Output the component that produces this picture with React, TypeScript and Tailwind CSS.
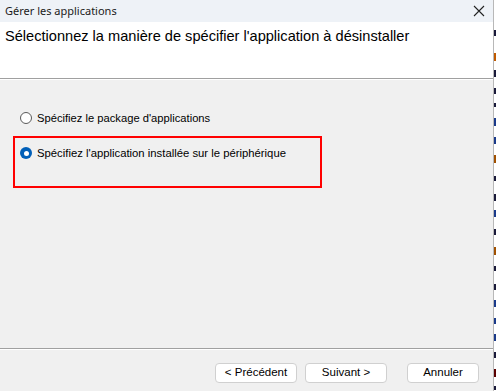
import React from "react";

const strip: [number, string, number][] = [
  [30, "#1a1a3a", 6], [53, "#c05a00", 8], [70, "#1a1a3a", 7], [88, "#1a1a3a", 6], [103, "#1a1a3a", 4],
  [118, "#1a3a8a", 8], [137, "#1a3a8a", 7], [155, "#a05000", 8], [176, "#1a1a3a", 5], [194, "#1a1a3a", 7],
  [210, "#1a3a8a", 7], [229, "#1a1a3a", 6], [247, "#a05000", 8], [266, "#1a1a3a", 5], [284, "#1a1a3a", 6],
  [300, "#1a3a8a", 7], [318, "#1a3a8a", 6], [334, "#1a3a8a", 7], [352, "#1a1a3a", 6],
  [369, "#5a0000", 8], [386, "#1a1a3a", 4],
];

export default function App() {
  const sans = { fontFamily: '"Liberation Sans", Arial, sans-serif' };
  return (
    <div className="flex w-[497px] h-[391px] overflow-hidden bg-white" style={sans}>
      <div className="flex flex-col w-[494px] h-[391px] border-r border-[#b8b8b8] shrink-0">
        <div className="h-[22px] bg-[#eef2f7] flex items-center justify-between pl-[5px] pr-[7px]">
          <span className="text-[11px] text-[#1a1a1a]" style={{ fontFamily: '"Noto Sans", sans-serif' }}>
            Gérer les applications
          </span>
          <svg width="12" height="12" viewBox="0 0 12 12" className="mr-[1px]">
            <path d="M1 1 L11 11 M11 1 L1 11" stroke="#222" strokeWidth="1.1" />
          </svg>
        </div>
        <div className="h-[56px] bg-white pl-[5px] pt-[5px]">
          <div className="text-[14.6px] text-black leading-[18px]">
            Sélectionnez la manière de spécifier l'application à désinstaller
          </div>
        </div>
        <div className="h-px bg-[#a0a0a0]" />
        <div className="h-px bg-white" />
        <div className="flex-1 bg-[#f0f0f0] pl-[13px] pt-[31px] pr-[20px]">
          <div className="flex items-center h-[14px] pl-[7px]">
            <span className="w-[12px] h-[12px] rounded-full border border-[#5a5a5a] bg-white shrink-0" />
            <span className="ml-[5px] text-[11.2px] text-black">Spécifiez le package d'applications</span>
          </div>
          <div className="mt-[11px] w-[309px] h-[52px] border-2 border-[#ff0000] pt-[8px] pl-[5px]">
            <div className="flex items-center h-[14px]">
              <span className="w-[12px] h-[12px] rounded-full bg-[#005fb8] flex items-center justify-center shrink-0">
                <span className="w-[5px] h-[5px] rounded-full bg-white" />
              </span>
              <span className="ml-[5px] text-[11.3px] text-black">Spécifiez l'application installée sur le périphérique</span>
            </div>
          </div>
        </div>
        <div className="h-px bg-[#a0a0a0]" />
        <div className="h-px bg-white" />
        <div className="h-[41px] bg-[#f0f0f0] flex items-start pt-[13px] pl-[215px]">
          <button className="w-[82px] h-[20px] rounded-[4px] border border-[#d0d0d0] bg-white text-[11.5px] text-black">
            &lt; Précédent
          </button>
          <button className="ml-[8px] w-[82px] h-[20px] rounded-[4px] border border-[#d0d0d0] bg-white text-[11.5px] text-black">
            Suivant &gt;
          </button>
          <button className="ml-[20px] w-[72px] h-[20px] rounded-[4px] border border-[#d0d0d0] bg-white text-[11.5px] text-black">
            Annuler
          </button>
        </div>
      </div>
      <div className="relative flex-1 bg-white overflow-hidden">
        {strip.map(([y, col, h], i) => (
          <div
            key={i}
            className="absolute left-0 w-[2px]"
            style={{ top: y, height: h, backgroundColor: col }}
          />
        ))}
      </div>
    </div>
  );
}
